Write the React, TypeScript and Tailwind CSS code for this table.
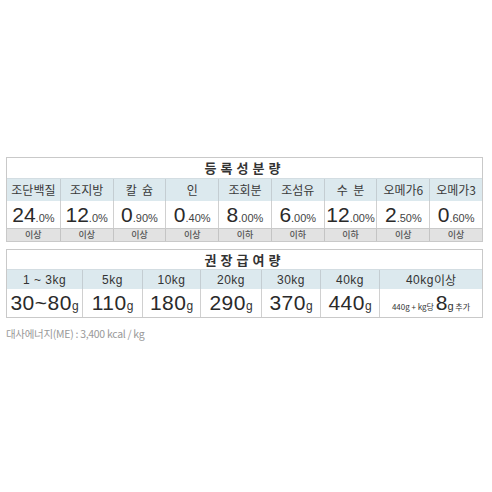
const font = "font-['Noto_Sans_CJK_KR','Noto_Sans',sans-serif]";

const nutrients = [
  { label: "조단백질", big: "24", small: ".0%", note: "이상" },
  { label: "조지방", big: "12", small: ".0%", note: "이상" },
  { label: "칼  슘", big: "0", small: ".90%", note: "이상" },
  { label: "인", big: "0", small: ".40%", note: "이상" },
  { label: "조회분", big: "8", small: ".00%", note: "이하" },
  { label: "조섬유", big: "6", small: ".00%", note: "이하" },
  { label: "수  분", big: "12", small: ".00%", note: "이하" },
  { label: "오메가6", big: "2", small: ".50%", note: "이상" },
  { label: "오메가3", big: "0", small: ".60%", note: "이상" }
];

const feeding = [
  { label: "1 ~ 3kg", big: "30~80" },
  { label: "5kg", big: "110" },
  { label: "10kg", big: "180" },
  { label: "20kg", big: "290" },
  { label: "30kg", big: "370" },
  { label: "40kg", big: "440" }
];

export default function App() {
  return (
    <div className={`w-[492px] h-[492px] bg-white pt-[157px] pl-[6px] ${font} text-[#333]`}>
      {/* 등록성분량 */}
      <div className="w-[477px] border border-[#c9c9c9]">
        <div className="h-[20px] flex items-center justify-center text-[13px] font-bold tracking-[4px] text-[#333]">
          등록성분량
        </div>
        <div className="grid grid-cols-9 bg-[#dce9ee] border-t border-[#d3dde2]">
          {nutrients.map((n, i) => (
            <div
              key={i}
              className={`h-[22px] flex items-center justify-center text-[12px] text-[#3a3a3a] whitespace-pre ${i > 0 ? "border-l border-[#c4cdd2]" : ""}`}
            >
              {n.label}
            </div>
          ))}
        </div>
        <div className="grid grid-cols-9">
          {nutrients.map((n, i) => (
            <div
              key={i}
              className={`h-[27px] flex items-baseline justify-center pt-[1px] ${i > 0 ? "border-l border-[#d0d0d0]" : ""}`}
            >
              <span className="text-[21px] leading-[26px] font-['Liberation_Sans',sans-serif] text-[#2a2a2a]">{n.big}</span>
              <span className="text-[11px] font-['Liberation_Sans',sans-serif] text-[#444]">{n.small}</span>
            </div>
          ))}
        </div>
        <div className="grid grid-cols-9 bg-[#e2e2e2] border-t border-[#c9c9c9]">
          {nutrients.map((n, i) => (
            <div
              key={i}
              className={`h-[12px] flex items-center justify-center text-[9px] font-medium text-[#555] ${i > 0 ? "border-l border-[#c4c4c4]" : ""}`}
            >
              {n.note}
            </div>
          ))}
        </div>
      </div>

      {/* 권장급여량 */}
      <div className="w-[477px] mt-[7px] border border-[#c9c9c9]">
        <div className="h-[19px] flex items-center justify-center text-[13px] font-bold tracking-[4px]">
          권장급여량
        </div>
        <div className="grid grid-cols-[75px_60px_58px_61px_59px_59px_1fr] bg-[#dce9ee] border-t border-[#d3dde2]">
          {feeding.map((f, i) => (
            <div
              key={i}
              className={`h-[19px] flex items-center justify-center text-[12px] font-['Liberation_Sans',sans-serif] tracking-[0.5px] ${i > 0 ? "border-l border-[#c4cdd2]" : ""}`}
            >
              {f.label}
            </div>
          ))}
          <div className="h-[19px] flex items-center justify-center text-[12px] border-l border-[#c4cdd2]">
            <span className="font-['Liberation_Sans',sans-serif] tracking-[0.5px]">40kg</span>이상
          </div>
        </div>
        <div className="grid grid-cols-[75px_60px_58px_61px_59px_59px_1fr]">
          {feeding.map((f, i) => (
            <div
              key={i}
              className={`h-[28px] flex items-baseline justify-center font-['Liberation_Sans',sans-serif] ${i > 0 ? "border-l border-[#d0d0d0]" : ""}`}
            >
              <span className="text-[21px] leading-[27px] text-[#2a2a2a] tracking-[0.5px]">{f.big}</span>
              <span className="text-[12px]">g</span>
            </div>
          ))}
          <div className="h-[28px] flex items-baseline justify-center border-l border-[#d0d0d0] text-[8px]">
            <span>440g + kg당&nbsp;</span>
            <span className="text-[21px] leading-[27px] font-['Liberation_Sans',sans-serif] text-[#2a2a2a]">8</span>
            <span className="text-[11px] font-['Liberation_Sans',sans-serif]">g</span>
            <span>&nbsp;추가</span>
          </div>
        </div>
      </div>

      <div className="mt-[8px] text-[10.5px] text-[#999] tracking-[-0.3px]">
        대사에너지(ME) : 3,400 kcal / kg
      </div>
    </div>
  );
}
